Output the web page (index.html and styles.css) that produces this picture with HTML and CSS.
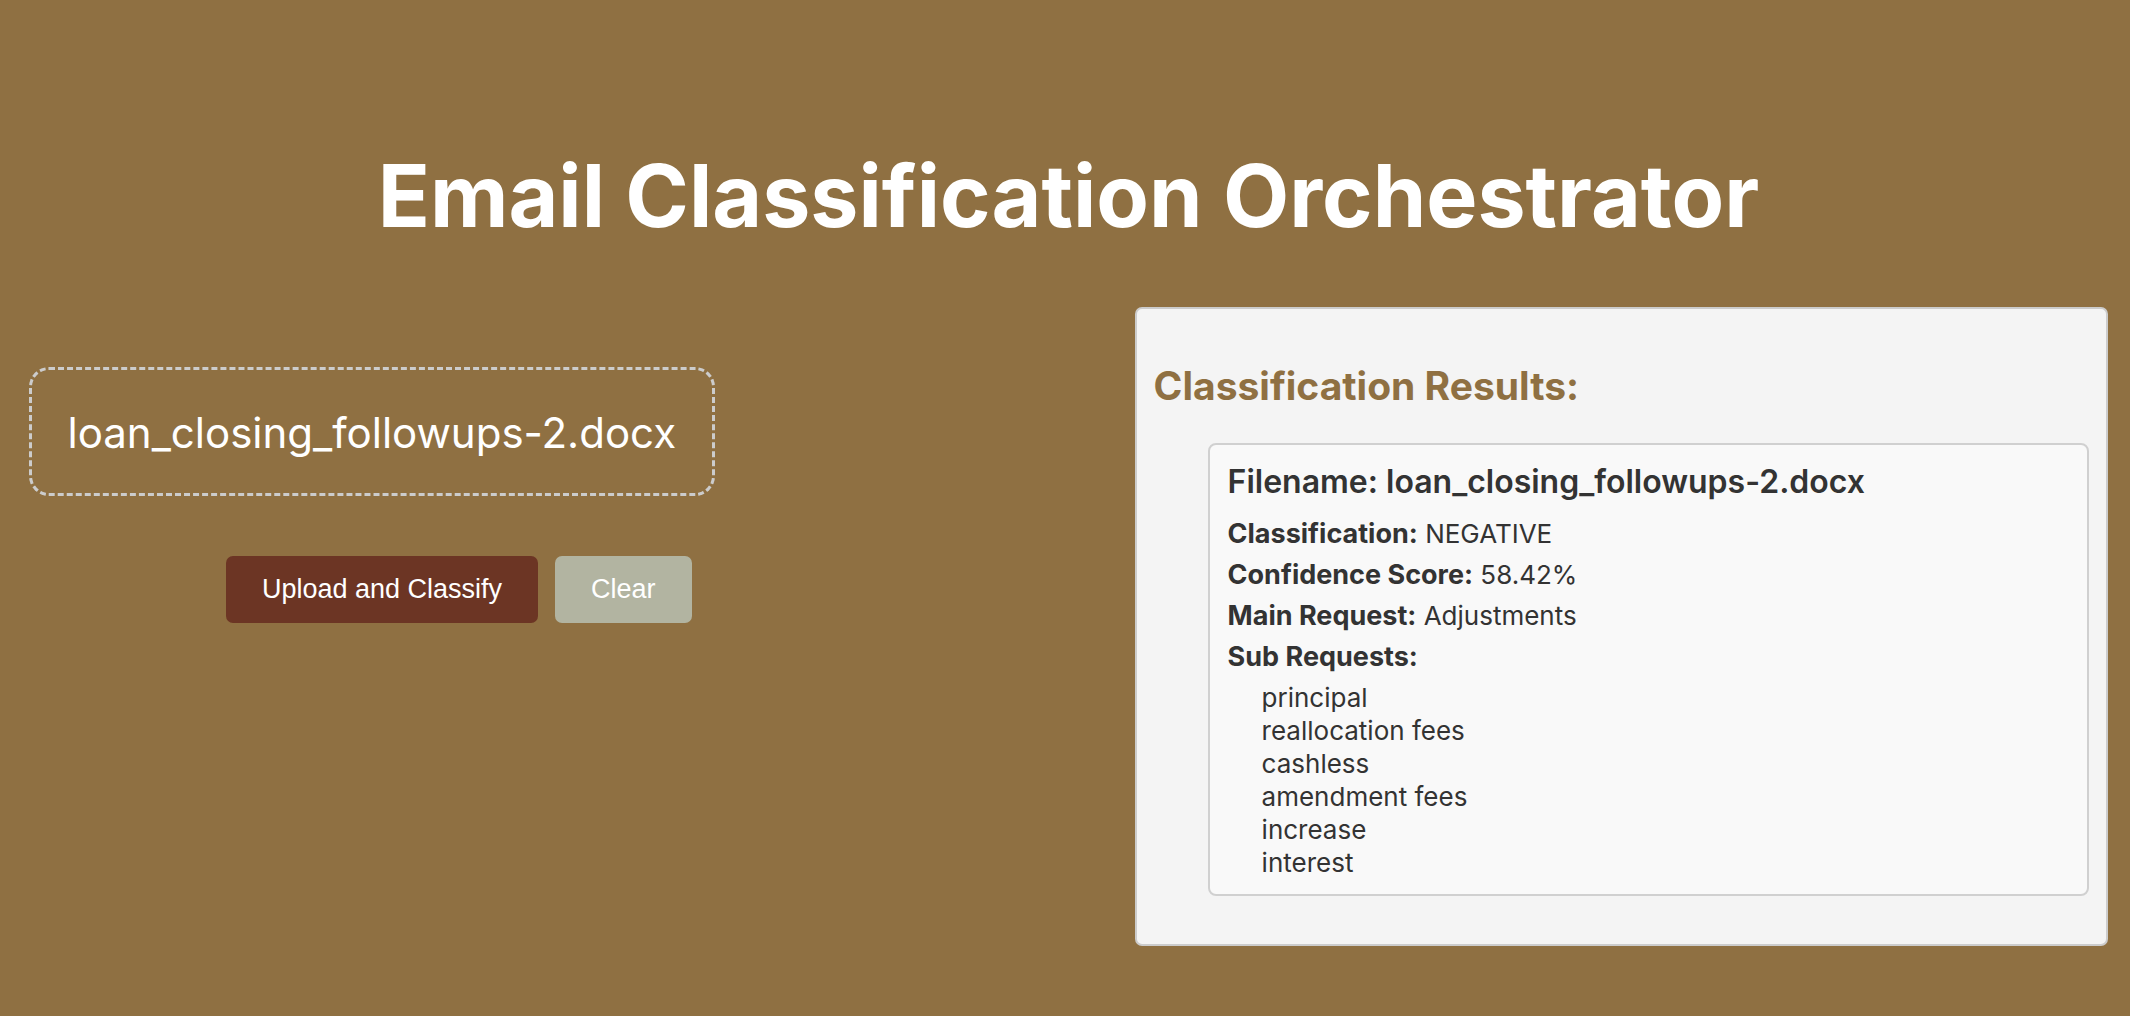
FILE: index.html
```html
<!DOCTYPE html>
<html lang="en">
<head>
<meta charset="utf-8">
<title>Email Classification Orchestrator</title>
<link rel="stylesheet" href="styles.css">
</head>
<body>
<h1 class="title">Email Classification Orchestrator</h1>
<main class="columns">
  <form class="upload">
    <button type="button" class="dropzone">loan_closing_followups-2.docx</button>
    <div class="actions">
      <button type="button" class="button button-primary">Upload and Classify</button>
      <button type="button" class="button button-clear">Clear</button>
    </div>
  </form>
  <section class="results">
    <h2 class="results-title">Classification Results:</h2>
    <article class="card">
      <h3 class="card-title">Filename: loan_closing_followups-2.docx</h3>
      <p class="field"><strong>Classification:</strong> NEGATIVE</p>
      <p class="field"><strong>Confidence Score:</strong> 58.42%</p>
      <p class="field"><strong>Main Request:</strong> Adjustments</p>
      <p class="field"><strong>Sub Requests:</strong></p>
      <ul class="requests">
        <li>principal</li>
        <li>reallocation fees</li>
        <li>cashless</li>
        <li>amendment fees</li>
        <li>increase</li>
        <li>interest</li>
      </ul>
    </article>
  </section>
</main>
</body>
</html>
```
FILE: styles.css
```css
* {
  box-sizing: border-box;
}

body {
  margin: 0;
  padding: 143px 22px 68px 29px;
  background: #8f7042;
  color: #fff;
  font-family: Inter, sans-serif;
}

.title {
  margin: 0 0 58px;
  font-size: 86px;
  line-height: 106px;
  font-weight: 700;
  text-align: center;
}

.columns {
  display: grid;
  grid-template-columns: 343fr 487fr;
  column-gap: 420px;
  align-items: start;
}

.upload {
  display: flex;
  flex-direction: column;
  align-items: flex-start;
  gap: 60px;
  padding-top: 60px;
}

.dropzone {
  width: 100%;
  padding: 37px 0 34px;
  border: 3px dashed #ccc;
  border-radius: 20px;
  background: none;
  color: #fff;
  font: 42px/52px Inter, sans-serif;
  white-space: nowrap;
}

.actions {
  display: flex;
  align-self: flex-end;
  gap: 17px;
  margin-right: 23px;
}

.button {
  padding: 17px 36px;
  border: 0;
  border-radius: 7px;
  color: #fff;
  font: 27px/33px "Liberation Sans", Arial, sans-serif;
}

.button-primary {
  background: #6c3524;
}

.button-clear {
  background: #b2b4a1;
}

.results {
  padding: 52px 17px 48px;
  border: 2px solid #ccc;
  border-radius: 7px;
  background: #f4f4f4;
  color: #333;
}

.results-title {
  margin: 0 0 32px;
  color: #8f7042;
  font-size: 39px;
  line-height: 50px;
  font-weight: 700;
}

.card {
  margin-left: 54px;
  padding: 17px 18px 15px;
  border: 2px solid #d0d0d0;
  border-radius: 8px;
  background: #f9f9f9;
  font-size: 26px;
  line-height: 33px;
}

.card-title {
  margin: 0 0 15px;
  font-size: 32px;
  line-height: 40px;
  font-weight: 600;
}

.field {
  margin: 0 0 8px;
}

.field strong {
  font-size: 27px;
  font-weight: 700;
}

.requests {
  margin: 0;
  padding: 0 0 0 34px;
  list-style: none;
}
```
